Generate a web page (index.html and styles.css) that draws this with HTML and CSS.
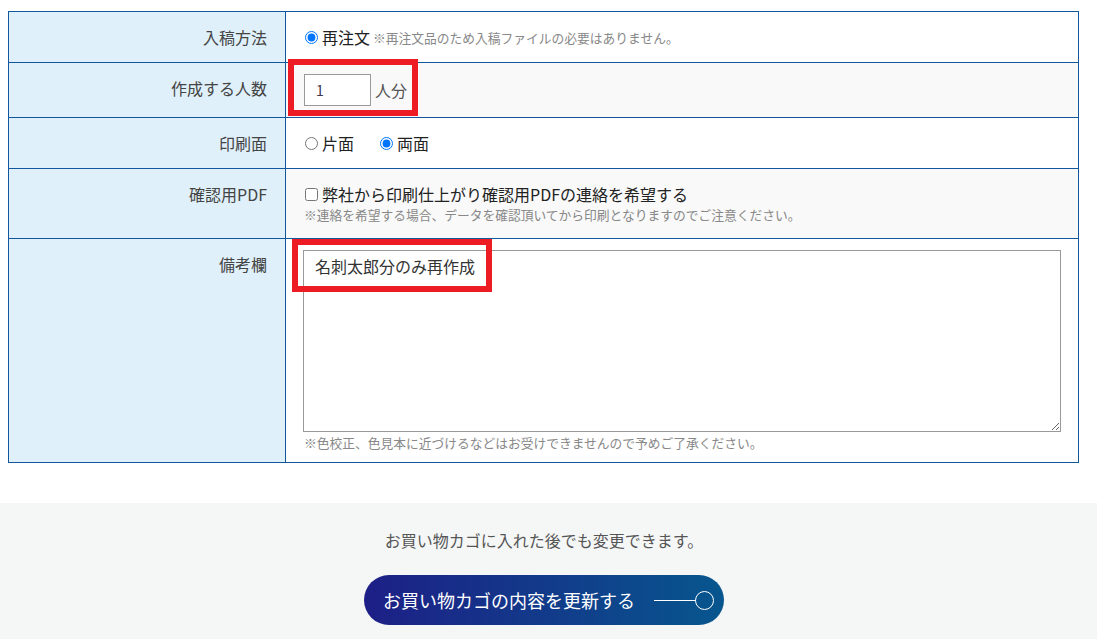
FILE: index.html
```html
<!DOCTYPE html>
<html lang="ja">
<head>
  <meta charset="UTF-8">
  <meta name="viewport" content="width=device-width, initial-scale=1.0">
  <title>再注文</title>
  <link rel="stylesheet" href="styles.css">
</head>
<body>
  <form class="order-form">
    <table class="order-table">
      <tr>
        <th>入稿方法</th>
        <td>
          <div class="line">
            <label class="choice">
              <input type="radio" name="method" checked />
              <span>再注文</span>
            </label>
            <span class="inline-note">※再注文品のため入稿ファイルの必要はありません。</span>
          </div>
        </td>
      </tr>
      <tr class="alt">
        <th>作成する人数</th>
        <td class="count-cell">
          <div class="count-wrap">
            <input type="text" class="count-input" value="1" />
            <span class="unit">人分</span>
            <span class="highlight highlight-count"></span>
          </div>
        </td>
      </tr>
      <tr>
        <th>印刷面</th>
        <td>
          <div class="line choices">
            <label class="choice">
              <input type="radio" name="side" />
              <span>片面</span>
            </label>
            <label class="choice">
              <input type="radio" name="side" checked />
              <span>両面</span>
            </label>
          </div>
        </td>
      </tr>
      <tr class="alt">
        <th>確認用PDF</th>
        <td class="pdf-cell">
          <div class="line">
            <label class="choice">
              <input type="checkbox" />
              <span>弊社から印刷仕上がり確認用PDFの連絡を希望する</span>
            </label>
          </div>
          <p class="note">※連絡を希望する場合、データを確認頂いてから印刷となりますのでご注意ください。</p>
        </td>
      </tr>
      <tr>
        <th>備考欄</th>
        <td class="memo-cell">
          <div class="memo-wrap">
            <textarea class="memo">名刺太郎分のみ再作成</textarea>
            <span class="highlight highlight-memo"></span>
          </div>
          <p class="note">※色校正、色見本に近づけるなどはお受けできませんので予めご了承ください。</p>
        </td>
      </tr>
    </table>
  </form>

  <div class="cart-area">
    <p class="cart-text">お買い物カゴに入れた後でも変更できます。</p>
    <button type="button" class="cart-btn">
      <span>お買い物カゴの内容を更新する</span>
      <span class="btn-arrow"><span class="btn-line"></span><span class="btn-circle"></span></span>
    </button>
  </div>
</body>
</html>
```

FILE: styles.css
```css
body {
  margin: 0;
  font-family: "Noto Sans CJK JP", "Noto Sans", sans-serif;
  color: #222;
  background: #fff;
}

.order-form {
  padding: 11px 0 0 8px;
}

.order-table {
  width: 1071px;
  border-collapse: collapse;
}

.order-table th,
.order-table td {
  border: 1px solid #10589b;
  vertical-align: top;
  font-size: 16px;
  line-height: 22px;
}

.order-table th {
  width: 240px;
  padding: 14px 18px;
  background: #dff0fb;
  color: #444;
  font-weight: 400;
  text-align: right;
}

.order-table td {
  padding: 14px 17px 14px 18px;
  background: #fff;
}

.order-table tr.alt td {
  background: #f9f9f9;
}

.line {
  display: flex;
  align-items: center;
  height: 22px;
}

.choices {
  gap: 25px;
}

.choice {
  display: inline-flex;
  align-items: center;
  color: #222;
}

.choice input {
  width: 13px;
  height: 13px;
  margin: 0 4px 0 1px;
}

.inline-note {
  margin-left: 3px;
  padding-top: 2px;
  font-size: 12.75px;
  color: #888;
}

.note {
  margin: 0;
  font-size: 12.75px;
  line-height: 20px;
  color: #888;
}

.order-table td.pdf-cell {
  padding-bottom: 13px;
}

.order-table td.count-cell {
  padding-top: 11px;
  padding-bottom: 11px;
}

.count-wrap {
  position: relative;
  display: flex;
  align-items: center;
}

.count-input {
  box-sizing: border-box;
  width: 67px;
  height: 32px;
  margin: 0;
  padding: 0 0 0 11px;
  border: 1px solid #999;
  font-family: inherit;
  font-size: 14px;
  color: #3d3550;
  background: #fff;
}

.unit {
  margin-left: 4px;
  color: #555;
}

.highlight {
  position: absolute;
  box-sizing: border-box;
  border: 6px solid #ed1c24;
  pointer-events: none;
}

.highlight-count {
  left: -16px;
  top: -15px;
  width: 130px;
  height: 57px;
}

.order-table td.memo-cell {
  padding-top: 11px;
  padding-bottom: 9px;
}

.memo-wrap {
  position: relative;
}

.memo {
  display: block;
  box-sizing: border-box;
  width: calc(100% + 1px);
  height: 182px;
  margin: 0 0 1px -1px;
  padding: 5px 11px;
  border: 1px solid #999;
  font-family: inherit;
  font-size: 16px;
  line-height: 20px;
  color: #333;
}

.highlight-memo {
  left: -12px;
  top: -11px;
  width: 200px;
  height: 53px;
}

.cart-area {
  margin-top: 40px;
  padding: 25px 9px 14px 0;
  background: #f5f7f7;
  text-align: center;
}

.cart-text {
  margin: 0 0 23px;
  font-size: 16px;
  line-height: 24px;
  color: #555;
}

.cart-btn {
  display: inline-flex;
  align-items: center;
  justify-content: space-between;
  box-sizing: border-box;
  width: 360px;
  height: 50px;
  padding: 0 10px 0 19px;
  border: none;
  border-radius: 25px;
  background: linear-gradient(90deg, #1d1f86, #07568e);
  color: #fff;
  font-family: inherit;
  font-size: 18px;
  cursor: pointer;
}

.btn-arrow {
  display: flex;
  align-items: center;
}

.btn-line {
  width: 42px;
  height: 1px;
  background: #fff;
}

.btn-circle {
  box-sizing: border-box;
  width: 19px;
  height: 19px;
  margin-left: -1px;
  border: 1.5px solid #fff;
  border-radius: 50%;
}
```
